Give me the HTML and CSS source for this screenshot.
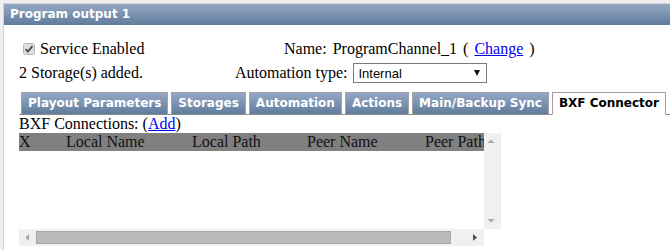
FILE: index.html
```html
<!DOCTYPE html>
<html lang="en">
<head>
  <meta charset="UTF-8">
  <title>Program output 1</title>
  <link rel="stylesheet" href="styles.css">
</head>
<body>

<div class="frame">
  <div class="panel">
    <div class="panel-title">Program output 1</div>

    <div class="panel-body">
      <div class="info">
        <label class="service">
          <span class="check">
            <svg width="12" height="12" viewBox="0 0 12 12">
              <rect x="0.5" y="0.5" width="11" height="11" rx="2" fill="#dedede" stroke="#b4b4b4"/>
              <path d="M2.6 6.2 L4.9 8.6 L9.4 3.2" fill="none" stroke="#4a4a4a" stroke-width="1.8"/>
            </svg>
          </span>
          Service Enabled
        </label>
        <div class="name-row">Name: ProgramChannel_1 ( <a href="#">Change</a> )</div>

        <div>2 Storage(s) added.</div>
        <div class="auto-row">
          Automation type:
          <span class="select-wrap">
            <select class="select">
              <option>Internal</option>
            </select>
          </span>
        </div>
      </div>

      <ul class="tabs">
        <li>Playout Parameters</li>
        <li>Storages</li>
        <li>Automation</li>
        <li>Actions</li>
        <li>Main/Backup Sync</li>
        <li class="active">BXF Connector</li>
      </ul>

      <div class="tab-panel">
        <div>BXF Connections: (<a href="#">Add</a>)</div>

        <div class="grid-scroll">
          <div class="grid-view">
            <table class="grid">
              <colgroup>
                <col style="width: 47px">
                <col style="width: 126px">
                <col style="width: 115px">
                <col style="width: 118px">
                <col style="width: 77px">
              </colgroup>
              <thead>
                <tr>
                  <th>X</th>
                  <th>Local Name</th>
                  <th>Local Path</th>
                  <th>Peer Name</th>
                  <th>Peer Path</th>
                </tr>
              </thead>
              <tbody></tbody>
            </table>
          </div>

          <!-- scrollbars -->
          <div class="vbar">
            <span class="sb-btn">
              <svg width="17" height="17"><polygon points="3.5,10 7,6.5 10.5,10" fill="#a8a8a8"/></svg>
            </span>
            <span class="sb-track"></span>
            <span class="sb-btn">
              <svg width="17" height="17"><polygon points="3.5,7 10.5,7 7,10.5" fill="#a8a8a8"/></svg>
            </span>
          </div>
          <div class="hbar">
            <span class="sb-btn">
              <svg width="17" height="17"><polygon points="10,5 10,12 6.5,8.5" fill="#a3a3a3"/></svg>
            </span>
            <span class="sb-track"><span class="sb-thumb"></span></span>
            <span class="sb-btn">
              <svg width="17" height="17"><polygon points="6,5 6,12 10,8.5" fill="#505050"/></svg>
            </span>
          </div>
          <div class="sb-corner"></div>
        </div>
      </div>
    </div>
  </div>
</div>

</body>
</html>
```

FILE: styles.css
```css
html, body {
  overflow: hidden;
}

body {
  margin: 0;
  font-family: "Liberation Serif", "Times New Roman", serif;
  font-size: 16px;
  color: #000;
  background: #fff;
}

a {
  color: #0000ee;
}

.frame {
  border-top: 3px solid #efefef;
  border-left: 3px solid #efefef;
}

.panel {
  border-top: 1px solid #d4d4d4;
  border-left: 1px solid #d4d4d4;
  height: 246px;
}

.panel-title {
  height: 21px;
  padding-left: 6px;
  background: linear-gradient(#94a8c4, #607c9c);
  color: #fff;
  font: bold 12px "DejaVu Sans", Verdana, sans-serif;
  line-height: 21px;
}

.panel-body {
  padding: 15px 0 0 15px;
}

.info {
  display: grid;
  grid-template-columns: 216px auto;
  row-gap: 5px;
  align-items: center;
  line-height: 18px;
}

.service {
  display: flex;
  align-items: center;
}

.check {
  display: flex;
  margin: 0 5px 0 4px;
}

.name-row {
  padding-left: 49px;
  word-spacing: 2px;
}

.auto-row {
  display: flex;
  align-items: center;
}

.select-wrap {
  position: relative;
  margin-left: 6px;
}

.select {
  appearance: none;
  width: 134px;
  height: 20px;
  margin: 0;
  padding: 0 0 0 4px;
  border: 1px solid #7a7a7a;
  border-radius: 0;
  background: #fff;
  font: 13px "Liberation Sans", Arial, sans-serif;
  color: #000;
}

.select-wrap::after {
  content: "";
  position: absolute;
  right: 7px;
  top: 7px;
  border-left: 3.5px solid transparent;
  border-right: 3.5px solid transparent;
  border-top: 6px solid #111;
  pointer-events: none;
}

.tabs {
  list-style: none;
  display: flex;
  gap: 3px;
  margin: 9px 0 0;
  padding: 0 0 0 2px;
  border-bottom: 1px solid #8a8a8a;
}

.tabs li {
  margin-bottom: -1px;
  padding: 0 6px;
  border: 1px solid #a4a4a4;
  border-bottom-color: #8a8a8a;
  background: linear-gradient(#94a8c4, #607c9c);
  color: #fff;
  font: bold 12px "DejaVu Sans", Verdana, sans-serif;
  line-height: 21px;
  cursor: pointer;
}

.tabs li.active {
  background: #fff;
  color: #000;
  border-color: #a0a0a0;
  border-bottom-color: #fff;
}

.tab-panel {
  line-height: 18px;
}

.grid-scroll {
  display: grid;
  grid-template-columns: 465px 17px;
  grid-template-rows: 96px 17px;
  width: 482px;
}

.grid-view {
  overflow: hidden;
}

.grid {
  border-collapse: collapse;
  table-layout: fixed;
  width: 483px;
}

.grid th {
  padding: 0;
  text-align: left;
  font-weight: normal;
  white-space: nowrap;
  overflow: hidden;
  background: #808080;
  color: #111;
  line-height: 18px;
}

.vbar, .hbar {
  display: flex;
  background: #f0f0f0;
}

.vbar {
  flex-direction: column;
}

.sb-btn {
  display: flex;
  flex: none;
  width: 17px;
  height: 17px;
}

.sb-track {
  flex: 1;
}

.hbar .sb-track {
  padding: 2px 0;
}

.sb-thumb {
  display: block;
  width: 415px;
  height: 13px;
  box-sizing: border-box;
  background: #bababa;
  border: 1px solid #a6a6a6;
}

.sb-corner {
  background: #fff;
}
```
